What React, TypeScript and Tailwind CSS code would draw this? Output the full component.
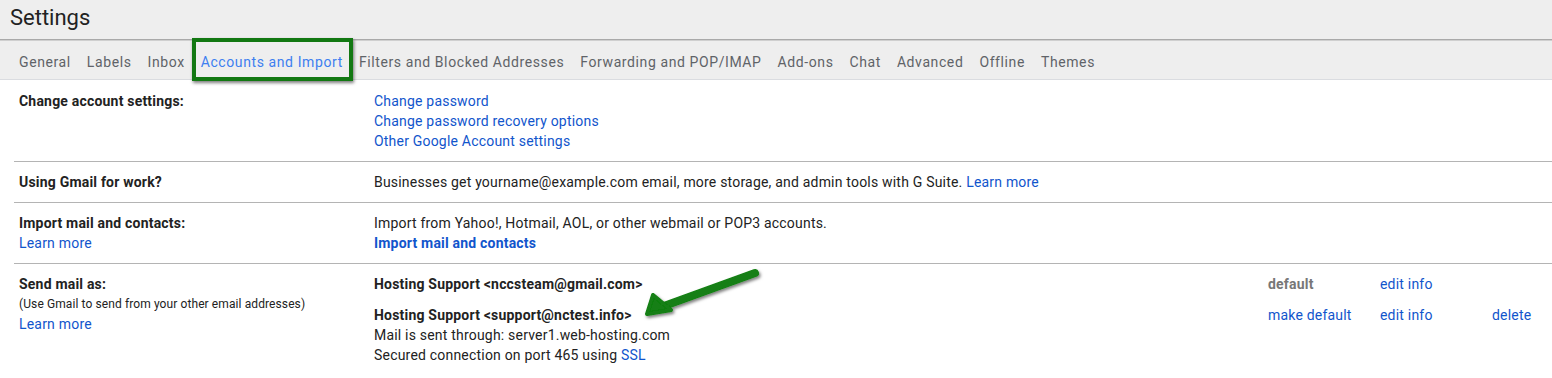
import React from "react";

const tabs = [
  "General",
  "Labels",
  "Inbox",
  "Accounts and Import",
  "Filters and Blocked Addresses",
  "Forwarding and POP/IMAP",
  "Add-ons",
  "Chat",
  "Advanced",
  "Offline",
  "Themes",
];

const link = "text-[#1155cc]";

export default function App() {
  return (
    <div
      className="relative w-[1552px] h-[378px] overflow-hidden bg-white text-[14px] text-[#222] tracking-[0.2px]"
      style={{ fontFamily: "Roboto, 'Liberation Sans', sans-serif" }}
    >
      {/* Title bar */}
      <div className="h-[40px] bg-[#eeeeee] flex items-center pl-[10px] pb-[4px] border-b border-[#a9a9a9]">
        <span className="text-[22px] text-[#222] leading-none tracking-normal">Settings</span>
      </div>
      {/* Tabs */}
      <div className="h-[40px] bg-[#eeeeee] border-t border-[#cfcfcf] border-b border-b-[#dadce0] flex items-center pl-[11px] pt-[3px]">
        {tabs.map((t) => (
          <div
            key={t}
            className={
              "relative px-[8px] text-[14px] leading-[20px] tracking-[0.6px] " +
              (t === "Accounts and Import" ? "text-[#3d7ff0]" : "text-[#5f6368]")
            }
          >
            {t}
            {t === "Accounts and Import" && (
              <div className="absolute left-[-1px] right-[-2px] top-[-14px] h-[43px] border-4 border-[#127812] shadow-[1px_2px_3px_rgba(0,0,0,0.5)]" />
            )}
          </div>
        ))}
      </div>

      {/* Rows */}
      <div className="pl-[14px]">
        <Row
          label={<div className="font-bold">Change account settings:</div>}
          value={
            <div className="flex flex-col">
              <span className={link}>Change password</span>
              <span className={link}>Change password recovery options</span>
              <span className={link}>Other Google Account settings</span>
            </div>
          }
          first
        />
        <Row
          label={<div className="font-bold">Using Gmail for work?</div>}
          value={
            <div>
              Businesses get yourname@example.com email, more storage, and admin tools with G Suite.{" "}
              <span className={link}>Learn more</span>
            </div>
          }
        />
        <Row
          label={
            <div className="flex flex-col">
              <span className="font-bold">Import mail and contacts:</span>
              <span className={link}>Learn more</span>
            </div>
          }
          value={
            <div className="flex flex-col">
              <span>Import from Yahoo!, Hotmail, AOL, or other webmail or POP3 accounts.</span>
              <span className={link + " font-bold"}>Import mail and contacts</span>
            </div>
          }
        />
        <Row
          label={
            <div className="flex flex-col">
              <span className="font-bold">Send mail as:</span>
              <span className="text-[12px] tracking-[0.1px]">(Use Gmail to send from your other email addresses)</span>
              <span className={link}>Learn more</span>
            </div>
          }
          value={
            <div className="flex flex-col gap-[11px]">
              <div className="flex">
                <div className="w-[894px] shrink-0 font-bold">Hosting Support &lt;nccsteam@gmail.com&gt;</div>
                <div className="w-[112px] shrink-0 font-bold text-[#777]">default</div>
                <div className={"w-[112px] shrink-0 " + link}>edit info</div>
                <div className="w-[60px] shrink-0" />
              </div>
              <div className="flex">
                <div className="w-[894px] shrink-0 flex flex-col">
                  <span className="font-bold">Hosting Support &lt;support@nctest.info&gt;</span>
                  <span>Mail is sent through: server1.web-hosting.com</span>
                  <span>
                    Secured connection on port 465 using <span className={link}>SSL</span>
                  </span>
                </div>
                <div className={"w-[112px] shrink-0 " + link}>make default</div>
                <div className={"w-[112px] shrink-0 " + link}>edit info</div>
                <div className={"w-[60px] shrink-0 " + link}>delete</div>
              </div>
            </div>
          }
        />
      </div>

      {/* Arrow annotation */}
      <svg
        className="absolute left-[640px] top-[263px]"
        width="130"
        height="64"
        viewBox="0 0 130 64"
      >
        <defs>
          <filter id="sh" x="-20%" y="-30%" width="150%" height="170%">
            <feDropShadow dx="1.5" dy="2" stdDeviation="1.5" floodColor="#000" floodOpacity="0.5" />
          </filter>
        </defs>
        <g filter="url(#sh)">
          <line x1="115" y1="10" x2="24" y2="43" stroke="#127f12" strokeWidth="8" strokeLinecap="round" />
          <polygon points="7,51 13,32 31,47" fill="#127f12" stroke="#127f12" strokeWidth="4" strokeLinejoin="round" />
        </g>
      </svg>
    </div>
  );
}

function Row({
  label,
  value,
  first,
}: {
  label: React.ReactNode;
  value: React.ReactNode;
  first?: boolean;
}) {
  return (
    <div
      className={
        "flex leading-[20px] pb-[10px] " + (first ? "pt-[11px]" : "pt-[10px] border-t border-[#b4b4b4]")
      }
    >
      <div className="w-[360px] shrink-0 pl-[5px]">{label}</div>
      <div className="flex-1 min-w-0">{value}</div>
    </div>
  );
}
